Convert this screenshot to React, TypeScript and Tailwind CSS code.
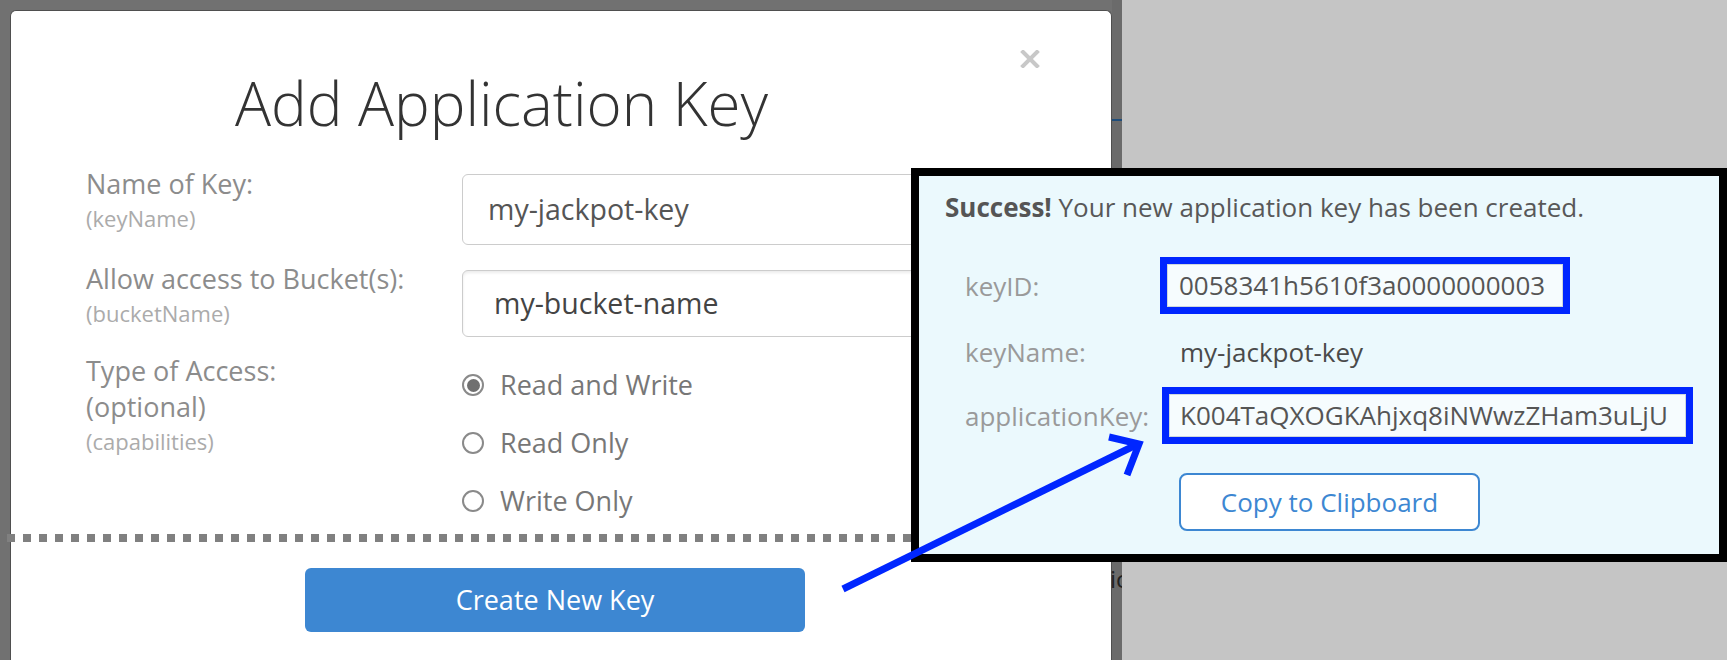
import React from "react";

const labelCls = "text-[27px] leading-[36px] text-[#8c8c8c]";
const subLabelCls = "mt-[2px] text-[22px] leading-[28px] text-[#ababab]";

function Radio({ label, checked }: { label: string; checked?: boolean }) {
  return (
    <div className="flex h-[58px] items-center">
      <span className="flex h-[22px] w-[22px] items-center justify-center rounded-full border-2 border-[#8a8a8a] bg-white">
        {checked && <span className="h-[13px] w-[13px] rounded-full bg-[#707070]" />}
      </span>
      <span className="ml-[16px] text-[27px] leading-[36px] text-[#777]">{label}</span>
    </div>
  );
}

function KeyRow({ label, children }: { label: string; children: React.ReactNode }) {
  return (
    <div className="flex items-center">
      <div className="w-[195px] text-[26px] leading-[36px] text-[#9a9a9a]">{label}</div>
      {children}
    </div>
  );
}

function SuccessPanel() {
  return (
    <div className="absolute left-[911px] top-[168px] h-[394px] w-[816px] border-[8px] border-black bg-[#ebf9fd]">
      <p className="pl-[26px] pt-[13px] text-[26px] leading-[36px] text-[#585858]">
        <b className="font-bold text-[#555]">Success!</b> Your new application key has been created.
      </p>
      <div className="pl-[46px]">
        <div className="mt-[32px]">
          <KeyRow label="keyID:">
            <div className="h-[57px] w-[410px] border-[7px] border-[#0026ff]">
              <div className="flex h-full items-center border border-[#cfd8dc] bg-[#f6fcfe] pl-[11px] text-[26px] text-[#555]">
                0058341h5610f3a0000000003
              </div>
            </div>
          </KeyRow>
        </div>
        <div className="mt-[20px]">
          <KeyRow label="keyName:">
            <div className="pl-[20px] text-[26px] leading-[36px] text-[#4a4a4a]">my-jackpot-key</div>
          </KeyRow>
        </div>
        <div className="mt-[17px]">
          <KeyRow label="applicationKey:">
            <div className="ml-[2px] h-[57px] w-[531px] border-[7px] border-[#0026ff]">
              <div className="flex h-full items-center border border-[#cfd8dc] bg-[#f6fcfe] pl-[10px] text-[26px] text-[#555]">
                K004TaQXOGKAhjxq8iNWwzZHam3uLjU
              </div>
            </div>
          </KeyRow>
        </div>
        <button className="ml-[214px] mt-[29px] flex h-[58px] w-[301px] items-center justify-center rounded-[8px] border-2 border-[#3d87d2] bg-white text-[26px] text-[#3d87d2]">
          Copy to Clipboard
        </button>
      </div>
    </div>
  );
}

export default function App() {
  return (
    <div className="relative flex h-[660px] w-[1727px] overflow-hidden bg-[#c5c5c5] font-['Open_Sans',sans-serif]">
      <div className="flex w-[1122px] shrink-0 bg-[#717171] pl-[10px]">
        <div className="mt-[10px] h-[660px] w-[1102px] shrink-0 rounded-t-[6px] border-x border-t border-[#4f4f4f] bg-white">
          <div className="flex items-start">
            <h1 className="w-[981px] pt-[62px] text-center text-[60px] font-light leading-[60px] text-[#333]">
              Add Application Key
            </h1>
            <svg className="ml-[28px] mt-[39px]" width="20" height="18" viewBox="0 0 20 18">
              <path d="M3 2 L17 16 M17 2 L3 16" stroke="#c8c8c8" strokeWidth="4" strokeLinecap="square" />
            </svg>
          </div>

          <div className="pl-[75px]">
            <div className="mt-[33px] flex h-[95px]">
              <div className="w-[376px]">
                <div className={labelCls}>Name of Key:</div>
                <div className={subLabelCls}>(keyName)</div>
              </div>
              <div className="mt-[8px] flex h-[71px] w-[620px] items-center rounded-[6px] border border-[#cccccc] pl-[25px] text-[28.5px] text-[#555]">
                my-jackpot-key
              </div>
            </div>

            <div className="flex h-[92px]">
              <div className="w-[376px]">
                <div className={labelCls}>Allow access to Bucket(s):</div>
                <div className={subLabelCls}>(bucketName)</div>
              </div>
              <div className="mt-[9px] flex h-[67px] w-[620px] items-center rounded-[6px] border border-[#cccccc] pl-[31px] text-[28.5px] text-[#444] shadow-[inset_0_2px_3px_rgba(0,0,0,0.08)]">
                my-bucket-name
              </div>
            </div>

            <div className="flex">
              <div className="w-[376px]">
                <div className={labelCls}>
                  Type of Access:
                  <br />
                  (optional)
                </div>
                <div className={subLabelCls}>(capabilities)</div>
              </div>
              <div className="mt-[3px]">
                <Radio label="Read and Write" checked />
                <Radio label="Read Only" />
                <Radio label="Write Only" />
              </div>
            </div>

            <button className="ml-[219px] mt-[38px] flex h-[64px] w-[500px] items-center justify-center rounded-[6px] bg-[#3d87d2] text-[27px] text-white">
              Create New Key
            </button>
          </div>
        </div>
        <div className="flex w-[10px] flex-col bg-[#6b6b6b]">
          <div className="mt-[119px] h-[2px] bg-[#1f4d7a]" />
          <div className="-ml-[2px] mt-[446px] h-[24px] w-[12px] overflow-hidden text-[24px] leading-[24px] text-[#222]">
            ic
          </div>
        </div>
      </div>
      <div className="flex-1" />

      <svg className="pointer-events-none absolute left-0 top-0" width="1727" height="660">
        <line x1="7" y1="538" x2="911" y2="538" stroke="#808080" strokeWidth="8" strokeDasharray="8 8" />
      </svg>

      <SuccessPanel />

      <svg className="pointer-events-none absolute left-0 top-0" width="1727" height="660">
        <line x1="843" y1="589" x2="1136" y2="445" stroke="#0026ff" strokeWidth="7" />
        <polyline points="1109,437 1139,444 1127,475" fill="none" stroke="#0026ff" strokeWidth="7" strokeLinejoin="miter" />
      </svg>
    </div>
  );
}
